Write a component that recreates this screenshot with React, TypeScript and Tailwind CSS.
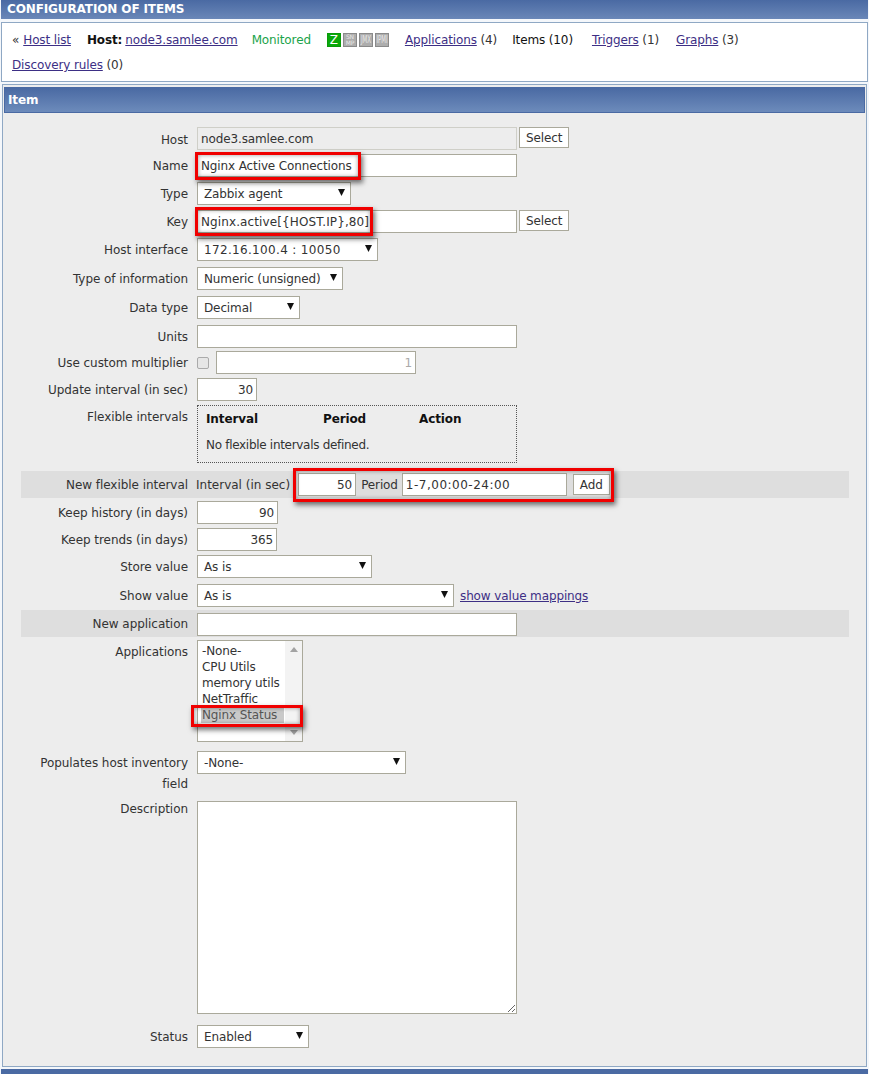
import * as React from "react";

const inputCls = "block border border-[#aaa99b] bg-white px-[3px] text-[12px] text-[#333] outline-none";

function Row({ label, height, band, labelPad = "pt-[5px]", children }: { label: React.ReactNode; height: string; band?: boolean; labelPad?: string; children?: React.ReactNode }) {
  return (
    <div className={`flex ${height} ${band ? "bg-[#dedede]" : ""}`}>
      <div className={`w-[167px] shrink-0 ${labelPad} text-right text-[12px] leading-[15px] tracking-[-0.05px] text-[#333]`}>{label}</div>
      <div className="flex min-w-0 flex-1 items-start pl-[9px]">{children}</div>
    </div>
  );
}

function Sel({ w, value, spaced }: { w: string; value: string; spaced?: boolean }) {
  return (
    <div className={`relative h-[23px] ${w} border border-[#aaa99b] bg-white pl-[6px] text-[12px] leading-[22px] text-[#333] ${spaced ? "tracking-[0.33px]" : ""}`}>
      {value}
      <svg viewBox="0 0 7 7" className="absolute right-[5px] top-[6px] h-[7px] w-[7px]">
        <path d="M0 0h7L3.5 7z" fill="#111" />
      </svg>
    </div>
  );
}

function Btn({ label }: { label: string }) {
  return (
    <button type="button" className="h-[21px] border border-[#aaa99b] bg-white px-[6px] text-[12px] leading-[20px] text-[#333]">
      {label}
    </button>
  );
}

function TxtInput({ w, value = "", right, muted, extra = "" }: { w: string; value?: string; right?: boolean; muted?: boolean; extra?: string }) {
  return (
    <input
      readOnly
      value={value}
      className={`${inputCls} h-[23px] ${w} ${right ? "text-right" : ""} ${muted ? "text-[#aaa]" : ""} ${extra}`}
    />
  );
}

function Mark({ box }: { box: string }) {
  return <div className={`pointer-events-none absolute border-[3px] border-[#f00000] shadow-[2px_3px_5px_rgba(0,0,0,0.55),inset_0_0_4px_rgba(0,0,0,0.4)] ${box}`} />;
}

function Agent({ green, children }: { green?: boolean; children: React.ReactNode }) {
  return (
    <span className={`flex h-[14px] w-[14px] items-center justify-center border text-center ${green ? "border-[#0a9a0a] bg-[#0aa80a] text-white" : "border-[#8a8a8a] bg-[#adadad] text-[#e8e8e8]"}`}>
      {children}
    </span>
  );
}

function Lnk({ children }: { children: React.ReactNode }) {
  return <a className="text-[#3d2f85] underline">{children}</a>;
}

export default function App() {
  return (
    <div className="relative h-[1074px] w-[869px] overflow-hidden bg-[#f4f7fb] font-['DejaVu_Sans','Liberation_Sans',sans-serif] text-[12px] tracking-[-0.12px] text-[#333]">
      <div className="mx-px h-[19px] bg-gradient-to-b from-[#4a6aa3] to-[#6a87b8] pl-[6px] text-[12px] font-bold leading-[18px] text-white">
        CONFIGURATION OF ITEMS
      </div>
      <div className="mx-px mt-[3px] h-[60px] border border-[#8fa8c4] bg-white pl-[10px] pt-[9px] leading-[16px]">
        <div className="flex h-[16px] items-center">
          <span className="mr-[4px]">«</span>
          <Lnk>Host list</Lnk>
          <b className="ml-[16px] text-[#111]">Host:</b>
          <span className="ml-[3px]"><Lnk>node3.samlee.com</Lnk></span>
          <span className="ml-[14px] text-[#1aa34a]">Monitored</span>
          <span className="ml-[16px] flex gap-[2px]">
            <Agent green><span className="text-[12px] leading-[12px]">Z</span></Agent>
            <Agent><span className="text-[6px] leading-[6px]">SN<br />MP</span></Agent>
            <Agent><span className="shrink-0 scale-x-50 text-[11px] leading-[12px]">JMX</span></Agent>
            <Agent><span className="shrink-0 scale-x-50 text-[11px] leading-[12px]">IPMI</span></Agent>
          </span>
          <span className="ml-[16px]"><Lnk>Applications</Lnk> (4)</span>
          <span className="ml-[15px] text-[#111]">Items (10)</span>
          <span className="ml-[19px]"><Lnk>Triggers</Lnk> (1)</span>
          <span className="ml-[17px]"><Lnk>Graphs</Lnk> (3)</span>
        </div>
        <div className="mt-[9px] h-[16px]"><Lnk>Discovery rules</Lnk> (0)</div>
      </div>

      <div className="mx-[2px] mt-[2px] h-[983px] border border-[#8fa8c4] bg-[#ededed] px-px pt-[2px]">
        <div className="h-[26px] border border-[#4a6aa3] bg-gradient-to-b from-[#4a6aa3] to-[#6d8bbb] pl-[3px] text-[12px] font-bold leading-[24px] text-white">
          Item
        </div>
        <div className="ml-[17px] mr-[16px] mt-[14px]">
          <Row label="Host" height="h-[27px]" labelPad="pt-[6px]">
            <input readOnly value="node3.samlee.com" className="block h-[23px] w-[320px] border border-[#cfcfc8] bg-[#ededed] px-[3px] text-[12px] text-[#333] outline-none" />
            <span className="ml-[2px]"><Btn label="Select" /></span>
          </Row>
          <Row label="Name" height="h-[28px]"><TxtInput w="w-[320px]" value="Nginx Active Connections" /></Row>
          <Row label="Type" height="h-[28px]"><Sel w="w-[154px]" value="Zabbix agent" /></Row>
          <Row label="Key" height="h-[28px]">
            <TxtInput w="w-[320px]" value="Nginx.active[{HOST.IP},80]" extra="tracking-[0.11px]" />
            <span className="ml-[2px]"><Btn label="Select" /></span>
          </Row>
          <Row label="Host interface" height="h-[29px]"><Sel w="w-[181px]" value="172.16.100.4 : 10050" spaced /></Row>
          <Row label="Type of information" height="h-[29px]"><Sel w="w-[146px]" value="Numeric (unsigned)" /></Row>
          <Row label="Data type" height="h-[29px]"><Sel w="w-[103px]" value="Decimal" /></Row>
          <Row label="Units" height="h-[26px]"><TxtInput w="w-[320px]" /></Row>
          <Row label="Use custom multiplier" height="h-[27px]">
            <input type="checkbox" readOnly className="mt-[6px] h-[12px] w-[12px] appearance-none rounded-[2px] border border-[#aaa] bg-[#e6e6e6]" />
            <span className="ml-[7px]"><TxtInput w="w-[200px]" value="1" right muted /></span>
          </Row>
          <Row label="Update interval (in sec)" height="h-[27px]"><TxtInput w="w-[60px]" value="30" right /></Row>
          <Row label="Flexible intervals" height="h-[66px]">
            <div className="h-[58px] w-[320px] border border-dotted border-[#555] px-[8px] pt-[4px]">
              <div className="flex text-[12px] font-bold leading-[18px] text-[#111]">
                <span className="w-[117px]">Interval</span>
                <span className="w-[96px]">Period</span>
                <span>Action</span>
              </div>
              <div className="mt-[9px] leading-[16px] tracking-[-0.3px]">No flexible intervals defined.</div>
            </div>
          </Row>
          <Row label="New flexible interval" height="h-[27px]" band labelPad="pt-[7px]">
            <div className="flex items-center pt-[2px]">
              <span className="-ml-px mr-[8px] tracking-normal">Interval (in sec)</span>
              <input readOnly value="50" className={`${inputCls} h-[23px] w-[58px] text-right`} />
              <span className="ml-[5px] mr-[4px]">Period</span>
              <input readOnly value="1-7,00:00-24:00" className={`${inputCls} h-[23px] w-[165px] tracking-[0.5px]`} />
              <span className="ml-[6px]"><Btn label="Add" /></span>
            </div>
          </Row>
          <Row label="Keep history (in days)" height="h-[27px] mt-[3px]"><TxtInput w="w-[81px]" value="90" right /></Row>
          <Row label="Keep trends (in days)" height="h-[27px]"><TxtInput w="w-[80px]" value="365" right /></Row>
          <Row label="Store value" height="h-[29px]"><Sel w="w-[175px]" value="As is" /></Row>
          <Row label="Show value" height="h-[26px]">
            <Sel w="w-[257px]" value="As is" />
            <span className="ml-[6px] pt-[3px]"><Lnk>show value mappings</Lnk></span>
          </Row>
          <Row label="New application" height="h-[27px]" band labelPad="pt-[7px]">
            <div className="pt-[3px]"><TxtInput w="w-[320px]" /></div>
          </Row>
          <Row label="Applications" height="h-[111px] mt-[3px]">
            <div className="relative flex h-[102px] w-[106px] border border-[#aaa99b] bg-white pl-[3px] pt-[2px] text-[12px] leading-[16px] text-[#333]">
              <div className="w-[83px]">
                <div className="pl-[1px]">-None-</div>
                <div className="pl-[1px]">CPU Utils</div>
                <div className="pl-[1px]">memory utils</div>
                <div className="pl-[1px]">NetTraffic</div>
                <div className="bg-[#c9c9c9] pl-[1px] text-[#555]">Nginx Status</div>
              </div>
              <div className="absolute bottom-0 right-0 top-0 flex w-[17px] flex-col items-center justify-between bg-[#f3f3f3] py-[6px]">
                <svg viewBox="0 0 8 5" className="h-[5px] w-[8px]"><path d="M0 5h8L4 0z" fill="#a3a3a3" /></svg>
                <svg viewBox="0 0 8 5" className="h-[5px] w-[8px]"><path d="M0 0h8L4 5z" fill="#a3a3a3" /></svg>
              </div>
            </div>
          </Row>
          <Row label={<>Populates host inventory<span className="mt-[6px] block">field</span></>} height="h-[50px]">
            <Sel w="w-[209px]" value="-None-" />
          </Row>
          <Row label="Description" height="h-[224px]" labelPad="pt-px">
            <textarea readOnly className="block h-[213px] w-[320px] border border-[#aaa99b] bg-white outline-none" />
          </Row>
          <Row label="Status" height="h-[30px]"><Sel w="w-[112px]" value="Enabled" /></Row>
        </div>
      </div>
      <div className="mx-px mt-[2px] h-[10px] bg-[#4a6aa3]" />

      <Mark box="left-[195px] top-[152px] h-[28px] w-[166px]" />
      <Mark box="left-[195px] top-[207px] h-[29px] w-[178px]" />
      <Mark box="left-[293px] top-[468px] h-[34px] w-[321px]" />
      <Mark box="left-[191px] top-[705px] h-[22px] w-[112px]" />
    </div>
  );
}
